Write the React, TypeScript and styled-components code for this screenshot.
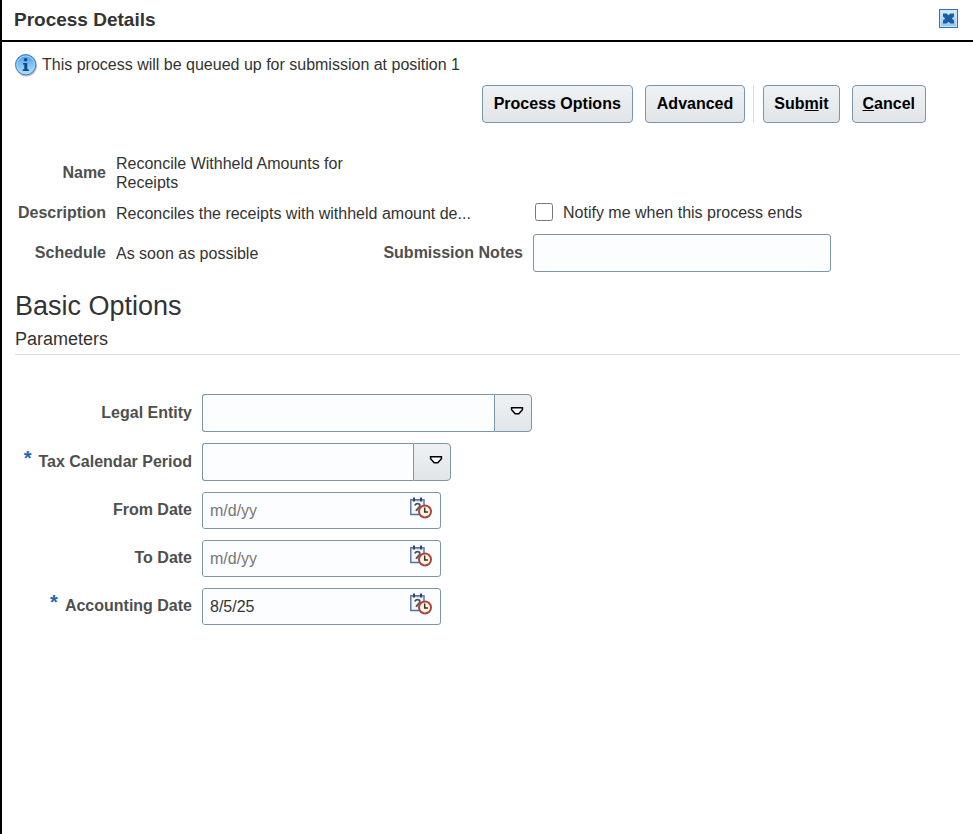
import React, { useState } from "react";
import styled, { createGlobalStyle } from "styled-components";

const GlobalStyle = createGlobalStyle`
  *, *::before, *::after { box-sizing: border-box; }
  body { margin: 0; background: #fff; }
  body, button, input {
    font-family: "Liberation Sans", Arial, sans-serif;
    font-size: 16px;
    line-height: 19px;
    color: #333;
  }
`;

const Dialog = styled.main`
  min-height: 100vh;
  border-left: 2px solid #000;
  background: #fff;
`;

const Header = styled.header`
  display: flex;
  align-items: center;
  justify-content: space-between;
  height: 42px;
  padding: 0 15px 3px 12px;
  border-bottom: 2px solid #000;
`;

const Title = styled.h1`
  margin: 0;
  padding-top: 2px;
  font-size: 19px;
  line-height: 22px;
`;

const IconButton = styled.button`
  display: flex;
  padding: 0;
  border: 0;
  background: none;
  cursor: pointer;
`;

const Body = styled.div`
  padding: 12px 13px;
`;

const Message = styled.p`
  display: flex;
  align-items: flex-end;
  gap: 4px;
  height: 23px;
  margin: 0 0 8px;

  span {
    padding-bottom: 3px;
  }
`;

const Toolbar = styled.div`
  display: flex;
  justify-content: flex-end;
  align-items: flex-start;
  gap: 12px;
  padding-right: 34px;
`;

const Button = styled.button`
  height: 38px;
  padding: 0 11px 2px;
  border: 1px solid #7b95a9;
  border-radius: 4px;
  background: linear-gradient(#eff2f4, #e2e5e8);
  color: #000;
  font-weight: bold;
  cursor: pointer;
`;

const ToolbarGroup = styled.div`
  display: flex;
  gap: 12px;

  & + & {
    padding-left: 9px;
    margin-left: -4px;
    border-left: 1px solid #cfdde8;
  }

  & + & ${Button} {
    padding: 0 10px 2px;
  }
`;

const Details = styled.div`
  display: grid;
  grid-template-columns: 91px 257px 140px minmax(0, 298px);
  grid-template-rows: auto 42px auto;
  column-gap: 10px;
  align-items: center;
  margin-top: 31px;
`;

const Label = styled.label`
  padding-bottom: 2px;
  color: #4f4f4f;
  font-weight: bold;
  text-align: right;
  white-space: nowrap;
`;

const Value = styled.span<{ $span?: number }>`
  grid-column: span ${(p) => p.$span ?? 1};
  overflow: hidden;
`;

const CheckLabel = styled.label`
  display: flex;
  align-items: center;
  gap: 10px;
  padding: 0 0 2px 2px;
`;

const Checkbox = styled.input`
  width: 18px;
  height: 18px;
  margin: 0;
`;

const TextInput = styled.input`
  width: 100%;
  height: 38px;
  padding: 0 7px;
  border: 1px solid #7b95a9;
  border-radius: 3px;
  background: #fcfdff;

  &::placeholder {
    color: #757575;
    opacity: 1;
  }
`;

const SectionTitle = styled.h2`
  margin: 17px 0 0;
  font-size: 27px;
  line-height: 34px;
  font-weight: normal;
`;

const SubTitle = styled.h3`
  margin: 0 0 39px;
  padding: 5px 0 3px;
  border-bottom: 1px solid #d3dde5;
  font-size: 18px;
  line-height: 23px;
  font-weight: normal;
`;

const Parameters = styled.form`
  display: grid;
  grid-template-columns: 177px minmax(0, 1fr);
  gap: 11px 10px;
  align-items: center;
`;

const Required = styled.span`
  margin-right: 7px;
  color: #1a66b8;
  font-size: 20px;
  line-height: 12px;
  vertical-align: 2px;
`;

const Combo = styled.div<{ $width: number }>`
  display: flex;
  max-width: ${(p) => p.$width}px;

  ${TextInput} {
    flex: 1;
    min-width: 0;
    border-right: 0;
    border-radius: 3px 0 0 3px;
  }
`;

const ComboButton = styled.button`
  display: flex;
  align-items: center;
  justify-content: center;
  width: 38px;
  height: 38px;
  padding: 0 0 4px 7px;
  border: 1px solid #7b95a9;
  border-radius: 0 4px 4px 0;
  background: linear-gradient(#eff2f4, #e2e5e8);
  cursor: pointer;
`;

const DateBox = styled.div`
  display: flex;
  align-items: center;
  max-width: 239px;
  height: 37px;
  padding-right: 8px;
  border: 1px solid #7b95a9;
  border-radius: 3px;
  background: #fcfdff;

  ${TextInput} {
    flex: 1;
    min-width: 0;
    height: 35px;
    border: 0;
  }

  ${IconButton} {
    padding-bottom: 5px;
  }
`;

function CloseIcon() {
  return (
    <svg width="19" height="19" viewBox="0 0 19 19" aria-hidden="true">
      <defs>
        <linearGradient id="closeFill" x1="0" y1="0" x2="0" y2="1">
          <stop offset="0" stopColor="#d9edfb" />
          <stop offset="1" stopColor="#8fc4ef" />
        </linearGradient>
      </defs>
      <rect x="0.5" y="0.5" width="18" height="18" fill="url(#closeFill)" stroke="#2f73b3" />
      <rect x="1.5" y="1.5" width="16" height="16" fill="none" stroke="#c8e5fa" />
      <path
        d="M4 4.5h3.5l2 1.8 2-1.8H15v3l-2.2 2 2.2 2v3h-3.5l-2-1.8-2 1.8H4v-3l2.2-2L4 7.500z"
        fill="#1c5ca3"
      />
    </svg>
  );
}

function InfoIcon() {
  return (
    <svg width="23" height="23" viewBox="0 0 23 23" aria-hidden="true">
      <defs>
        <linearGradient id="infoFill" x1="0" y1="0" x2="0" y2="1">
          <stop offset="0" stopColor="#4b9be0" />
          <stop offset="0.45" stopColor="#79bdf3" />
          <stop offset="1" stopColor="#b5e4ff" />
        </linearGradient>
      </defs>
      <circle cx="11.5" cy="12" r="10.5" fill="#b9bec4" />
      <circle cx="10.7" cy="10.7" r="10.2" fill="url(#infoFill)" stroke="#3c7fc0" />
      <circle cx="10.7" cy="10.7" r="8.7" fill="none" stroke="#a9d7f8" />
      <circle cx="10.6" cy="5.8" r="1.8" fill="#174a85" />
      <path d="M8 9h4.3v6.2h1.5v1.700H7.800v-1.700h1.500v-4.600H8z" fill="#174a85" />
    </svg>
  );
}

function ArrowIcon() {
  return (
    <svg width="14" height="10" viewBox="0 0 14 10" aria-hidden="true">
      <path
        d="M1.600 1.800h10.800v2L8.800 7.800H5.200L1.600 3.800z"
        fill="#fff"
        stroke="#000"
        strokeWidth="1.500"
      />
    </svg>
  );
}

function CalendarIcon() {
  return (
    <svg width="22" height="22" viewBox="0 0 22 22" aria-hidden="true">
      <path d="M0.800 2.800h13.200v14.700H0.800z" fill="#f4f7fd" stroke="#56709f" strokeWidth="1.400" />
      <path d="M1 3.500h13" stroke="#8497bd" strokeWidth="1.400" />
      <path d="M4 0.500v4M11 0.500v4" stroke="#35466e" strokeWidth="2" />
      <path
        d="M5 8.500c0.500-2.500 5.300-2.500 4.800 0.300C9.500 10.700 7 11 6.300 14"
        fill="none"
        stroke="#4c535f"
        strokeWidth="1.800"
      />
      <circle cx="15" cy="14.500" r="6" fill="#fff5e4" stroke="#a9483a" strokeWidth="2" />
      <path d="M14.700 10.500v4.500H18" fill="none" stroke="#343434" strokeWidth="1.500" />
    </svg>
  );
}

function ComboField({ id, label, width, required }: {
  id: string;
  label: string;
  width: number;
  required?: boolean;
}) {
  return (
    <>
      <Label htmlFor={id}>
        {required && <Required>*</Required>}
        {label}
      </Label>
      <Combo $width={width}>
        <TextInput id={id} type="text" required={required} />
        <ComboButton type="button" aria-label={`Search: ${label}`}>
          <ArrowIcon />
        </ComboButton>
      </Combo>
    </>
  );
}

function DateField({ id, label, initial = "", required }: {
  id: string;
  label: string;
  initial?: string;
  required?: boolean;
}) {
  const [value, setValue] = useState(initial);
  return (
    <>
      <Label htmlFor={id}>
        {required && <Required>*</Required>}
        {label}
      </Label>
      <DateBox>
        <TextInput
          id={id}
          type="text"
          placeholder="m/d/yy"
          value={value}
          required={required}
          onChange={(e) => setValue(e.target.value)}
        />
        <IconButton type="button" aria-label={`Select ${label}`}>
          <CalendarIcon />
        </IconButton>
      </DateBox>
    </>
  );
}

export default function App() {
  return (
    <>
      <GlobalStyle />
      <Dialog>
        <Header>
          <Title>Process Details</Title>
          <IconButton type="button" aria-label="Close">
            <CloseIcon />
          </IconButton>
        </Header>
        <Body>
          <Message>
            <InfoIcon />
            <span>This process will be queued up for submission at position 1</span>
          </Message>
          <Toolbar>
            <ToolbarGroup>
              <Button type="button">Process Options</Button>
              <Button type="button">Advanced</Button>
            </ToolbarGroup>
            <ToolbarGroup>
              <Button type="button">Sub<u>m</u>it</Button>
              <Button type="button"><u>C</u>ancel</Button>
            </ToolbarGroup>
          </Toolbar>
          <Details>
            <Label as="span">Name</Label>
            <Value>Reconcile Withheld Amounts for Receipts</Value>
            <span />
            <span />
            <Label as="span">Description</Label>
            <Value $span={2}>Reconciles the receipts with withheld amount de...</Value>
            <CheckLabel>
              <Checkbox type="checkbox" />
              Notify me when this process ends
            </CheckLabel>
            <Label as="span">Schedule</Label>
            <Value>As soon as possible</Value>
            <Label htmlFor="notes">Submission Notes</Label>
            <TextInput id="notes" type="text" />
          </Details>
          <SectionTitle>Basic Options</SectionTitle>
          <SubTitle>Parameters</SubTitle>
          <Parameters>
            <ComboField id="legal-entity" label="Legal Entity" width={330} />
            <ComboField id="tax-period" label="Tax Calendar Period" width={249} required />
            <DateField id="from-date" label="From Date" />
            <DateField id="to-date" label="To Date" />
            <DateField id="accounting-date" label="Accounting Date" initial="8/5/25" required />
          </Parameters>
        </Body>
      </Dialog>
    </>
  );
}
